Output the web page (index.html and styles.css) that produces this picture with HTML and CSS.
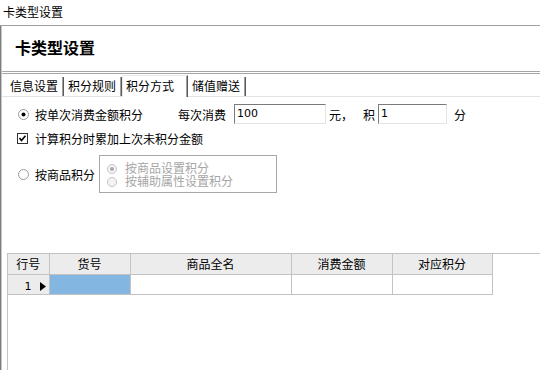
FILE: index.html
```html
<!DOCTYPE html>
<html lang="zh">
<head>
<meta charset="utf-8">
<link rel="stylesheet" href="styles.css">
</head>
<body>
<div class="titlebar">卡类型设置</div>
<div class="window">
  <div class="header">卡类型设置</div>
  <div class="tabs">
    <div class="tab">信息设置</div>
    <div class="tab">积分规则</div>
    <div class="tab active">积分方式</div>
    <div class="tab">储值赠送</div>
  </div>
  <div class="panel">
    <div class="row row1">
      <svg class="radio" width="11" height="11" viewBox="0 0 11 11"><circle cx="5.5" cy="5.5" r="5" fill="#fff" stroke="#9a9a9a"/><circle cx="5.5" cy="5.5" r="2" fill="#000"/></svg>
      <span class="lbl">按单次消费金额积分</span>
      <span class="each">每次消费</span>
      <span class="input in1">100</span>
      <span class="yuan">元，</span>
      <span class="ji">积</span>
      <span class="input in2">1</span>
      <span class="fen">分</span>
    </div>
    <div class="row row2">
      <svg class="check" width="11" height="11" viewBox="0 0 11 11"><rect x="0.5" y="0.5" width="10" height="10" fill="#fff" stroke="#333"/><path d="M2.5 5 L4.5 7.5 L8.5 2.8" fill="none" stroke="#000" stroke-width="1.6"/></svg>
      <span class="lbl2">计算积分时累加上次未积分金额</span>
    </div>
    <div class="row row3">
      <svg class="radio" width="11" height="11" viewBox="0 0 11 11"><circle cx="5.5" cy="5.5" r="5" fill="#fff" stroke="#9a9a9a"/></svg>
      <span class="lbl">按商品积分</span>
      <div class="groupbox">
        <div class="gitem">
          <svg class="gradio" width="10" height="10" viewBox="0 0 10 10"><circle cx="5" cy="5" r="4.5" fill="#f4f4f4" stroke="#c4c4c4"/><circle cx="5" cy="5" r="2" fill="#a8a8a8"/></svg>
          <span>按商品设置积分</span>
        </div>
        <div class="gitem">
          <svg class="gradio" width="10" height="10" viewBox="0 0 10 10"><circle cx="5" cy="5" r="4.5" fill="#f4f4f4" stroke="#c4c4c4"/></svg>
          <span>按辅助属性设置积分</span>
        </div>
      </div>
    </div>
    <div class="grid">
      <table>
        <colgroup>
          <col class="c1"><col class="c2"><col class="c3"><col class="c4"><col class="c5">
        </colgroup>
        <thead>
          <tr><th>行号</th><th>货号</th><th>商品全名</th><th>消费金额</th><th>对应积分</th></tr>
        </thead>
        <tbody>
          <tr>
            <td class="rowhead"><span class="num">1</span><svg width="6" height="9" viewBox="0 0 6 9"><path d="M0 0 L6 4.5 L0 9 Z" fill="#000"/></svg></td>
            <td class="sel"></td><td></td><td></td><td></td>
          </tr>
        </tbody>
      </table>
    </div>
  </div>
</div>
</body>
</html>
```

FILE: styles.css
```css
html, body {
  margin: 0;
  padding: 0;
}
body {
  width: 540px;
  height: 370px;
  overflow: hidden;
  background: #fff;
  font-family: "Noto Sans CJK SC", "Liberation Sans", sans-serif;
  font-size: 12px;
  color: #000;
  display: flex;
  flex-direction: column;
}
.titlebar {
  height: 26px;
  line-height: 24px;
  padding-left: 3px;
  border-bottom: 1px solid #a0a0a0;
  box-sizing: border-box;
}
.window {
  flex: 1;
  display: flex;
  flex-direction: column;
  border-left: 1px solid #7c7c7c;
  box-shadow: inset 1px 0 0 #c9c9c9;
  padding-left: 1px;
}
.header {
  height: 48px;
  display: flex;
  align-items: center;
  padding-left: 13px;
  padding-bottom: 3px;
  box-sizing: border-box;
  font-size: 16px;
  font-weight: bold;
  border-bottom: 3px double #a6a6a6;
}
.tabs {
  height: 21px;
  display: flex;
  align-items: flex-end;
  padding-left: 4px;
  margin-top: 1px;
  border-bottom: 1px solid #e3e3e3;
}
.tab {
  width: 58px;
  height: 19px;
  box-sizing: border-box;
  padding-left: 3px;
  line-height: 18px;
  border-left: 1px solid #fff;
  border-right: 1px solid #5a5a5a;
  box-shadow: inset -1px 0 0 #a0a0a0;
  white-space: nowrap;
}
.tab.active {
  width: 66px;
  height: 22px;
  margin-bottom: -1px;
  line-height: 19px;
  background: #fff;
  border-top: 1px solid #e8e8e8;
  border-left: 1px solid #e8e8e8;
}
.panel {
  flex: 1;
  display: flex;
  flex-direction: column;
  padding-top: 7px;
}
.row {
  display: flex;
  align-items: center;
  white-space: nowrap;
}
.row1 {
  height: 20px;
}
.row1 .radio { margin-left: 16px; }
.row1 .lbl { margin-left: 6px; }
.each { margin-left: 35px; }
.input {
  box-sizing: border-box;
  height: 20px;
  line-height: 18px;
  padding-left: 2px;
  border-top: 1px solid #7a7a7a;
  border-left: 1px solid #7a7a7a;
  border-right: 1px solid #e3e3e3;
  border-bottom: 1px solid #e3e3e3;
  font-family: "DejaVu Sans", "Liberation Sans", sans-serif;
  font-size: 11px;
}
.in1 { margin-left: 8px; width: 92px; }
.yuan { margin-left: 3px; }
.ji { margin-left: 10px; }
.in2 { margin-left: 3px; width: 69px; }
.fen { margin-left: 7px; }
.row2 {
  height: 16px;
  margin-top: 6px;
}
.check { margin-left: 15px; }
.lbl2 { margin-left: 7px; }
.row3 {
  margin-top: 9px;
}
.row3 .radio { margin-left: 16px; }
.row3 .lbl { margin-left: 6px; }
.groupbox {
  margin-left: 4px;
  width: 178px;
  height: 38px;
  box-sizing: border-box;
  border: 1px solid #a8a8a8;
  padding-top: 6px;
  padding-left: 7px;
  color: #a6a6a6;
  font-family: "Liberation Sans", "Noto Sans CJK SC", sans-serif;
}
.gitem {
  height: 13px;
  line-height: 13px;
  display: flex;
  align-items: center;
}
.gitem span {
  position: relative;
  top: 1px;
}
.gradio { margin-right: 8px; }
.grid {
  flex: 1;
  margin-top: 60px;
  margin-left: 5px;
  border-top: 1px solid #c3c3c3;
  border-left: 1px solid #c3c3c3;
}
table {
  border-collapse: collapse;
  table-layout: fixed;
  width: 484px;
}
col.c1 { width: 41px; }
col.c2 { width: 81px; }
col.c3 { width: 161px; }
col.c4 { width: 101px; }
col.c5 { width: 100px; }
th, td {
  height: 20px;
  padding: 0;
  border-right: 1px solid #c3c3c3;
  border-bottom: 1px solid #c3c3c3;
  font-weight: normal;
  text-align: center;
  box-sizing: border-box;
}
th {
  background: #ececec;
}
td.rowhead {
  background: #ececec;
  text-align: right;
  padding-right: 3px;
}
td.rowhead .num {
  font-family: "DejaVu Sans", "Liberation Sans", sans-serif;
  font-size: 11px;
  margin-right: 8px;
}
td.rowhead svg {
  vertical-align: -1px;
}
td.sel {
  background: #84b6e2;
}
```
